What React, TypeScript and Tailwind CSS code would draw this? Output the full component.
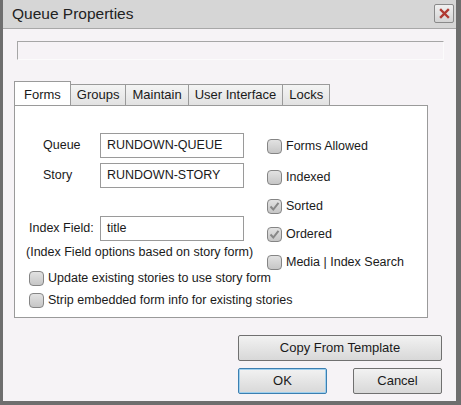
import React from "react";

const font = { fontFamily: '"Liberation Sans", Arial, sans-serif' };

function Check({ checked, label }: { checked?: boolean; label: string }) {
  return (
    <div className="flex items-center h-[20px]">
      <div className="w-[15px] h-[15px] rounded-[4px] border border-[#858585] bg-gradient-to-b from-[#e2e2e2] to-[#c6c6c6] flex items-center justify-center shrink-0">
        {checked && (
          <svg width="11" height="11" viewBox="0 0 11 11">
            <path d="M1.5 5.5 L4.3 8.5 L9.5 1.8" fill="none" stroke="#878787" strokeWidth="2" />
          </svg>
        )}
      </div>
      <span className="ml-[4px] text-[12.5px] text-[#1a1a1a] whitespace-nowrap">{label}</span>
    </div>
  );
}

function Field({ value }: { value: string }) {
  return (
    <div className="w-[144px] h-[25px] bg-white border border-[#9a9a9a] flex items-center pl-[6px] text-[12.5px] text-[#1a1a1a] whitespace-nowrap">
      {value}
    </div>
  );
}

function Tab({ label, active }: { label: string; active?: boolean }) {
  if (active) {
    return (
      <div className="h-[24px] px-[9px] bg-white border border-b-0 border-[#9a9a9a] flex items-start pt-[3px] text-[13px] text-[#1a1a1a] relative z-10 -mb-px">
        {label}
      </div>
    );
  }
  return (
    <div className="h-[21px] mt-[3px] px-[6px] bg-gradient-to-b from-[#f4f4f4] to-[#e2e2e2] border border-b-0 border-l-0 border-[#9a9a9a] flex items-center text-[13px] text-[#1a1a1a]">
      {label}
    </div>
  );
}

function Button({ label, primary, wide }: { label: string; primary?: boolean; wide?: boolean }) {
  return (
    <div
      className={`h-[26px] ${wide ? "w-[204px]" : "w-[89px]"} rounded-[2px] border ${
        primary ? "border-[#3c7fb1] shadow-[inset_0_0_0_1px_#9fd0ee]" : "border-[#707070]"
      } bg-gradient-to-b from-[#f2f2f2] to-[#d8d8d8] flex items-center justify-center text-[13px] text-[#1a1a1a]`}
    >
      {label}
    </div>
  );
}

export default function App() {
  return (
    <div
      className="w-[461px] h-[405px] flex flex-col bg-[#d6d6d6] border-l-[3px] border-r-[5px] border-b-[4px] border-[#6e6e6e]"
      style={font}
    >
      {/* Title bar */}
      <div className="h-[28px] flex items-center pl-[9px] pr-[2px] shrink-0">
        <span className="text-[15.5px] text-[#222]">Queue Properties</span>
        <div className="ml-auto mt-[-1px] w-[20px] h-[19px] rounded-[2px] border border-[#8a8a8a] bg-gradient-to-b from-[#f0f0f0] to-[#d4d4d4] flex items-center justify-center">
          <svg width="11" height="11" viewBox="0 0 11 11">
            <path d="M2 2 L9 9 M9 2 L2 9" stroke="#b03a32" strokeWidth="2.4" strokeLinecap="square" />
          </svg>
        </div>
      </div>

      {/* Body */}
      <div className="flex-1 bg-[#f6f3f6] border-t border-[#a8a8a8] flex flex-col">
        <div className="ml-[14px] mt-[12px] w-[427px] h-[19px] border-t border-l border-[#a6a6a6] border-b border-r border-b-[#fbfbfb] border-r-[#fbfbfb] bg-[#f6f3f6]" />

        {/* Tabs */}
        <div className="ml-[11px] mt-[21px] flex items-start">
          <Tab label="Forms" active />
          <Tab label="Groups" />
          <Tab label="Maintain" />
          <Tab label="User Interface" />
          <Tab label="Locks" />
        </div>

        {/* Panel */}
        <div className="ml-[11px] w-[414px] h-[213px] bg-white border border-[#9a9a9a] flex">
          <div className="w-[238px] flex flex-col">
            <div className="mt-[27px] flex items-center pl-[28px]">
              <span className="w-[57px] text-[12.5px] text-[#1a1a1a]">Queue</span>
              <Field value="RUNDOWN-QUEUE" />
            </div>
            <div className="mt-[5px] flex items-center pl-[28px]">
              <span className="w-[57px] text-[12.5px] text-[#1a1a1a]">Story</span>
              <Field value="RUNDOWN-STORY" />
            </div>
            <div className="mt-[28px] flex items-center pl-[14px]">
              <span className="w-[71px] text-[12.5px] text-[#1a1a1a]">Index Field:</span>
              <Field value="title" />
            </div>
            <div className="mt-[2px] pl-[11px] text-[12.5px] text-[#1a1a1a] whitespace-nowrap">
              (Index Field options based on story form)
            </div>
            <div className="mt-[7px] pl-[14px]">
              <Check label="Update existing stories to use story form" />
            </div>
            <div className="mt-[2px] pl-[14px]">
              <Check label="Strip embedded form info for existing stories" />
            </div>
          </div>
          <div className="flex flex-col pl-[14px] pt-[30px]">
            <Check label="Forms Allowed" />
            <div className="mt-[11px]">
              <Check label="Indexed" />
            </div>
            <div className="mt-[9px]">
              <Check label="Sorted" checked />
            </div>
            <div className="mt-[8px]">
              <Check label="Ordered" checked />
            </div>
            <div className="mt-[8px]">
              <Check label="Media | Index Search" />
            </div>
          </div>
        </div>

        {/* Buttons */}
        <div className="ml-[235px] mt-[17px] flex flex-col gap-[7px]">
          <Button label="Copy From Template" wide />
          <div className="flex gap-[26px]">
            <Button label="OK" primary />
            <Button label="Cancel" />
          </div>
        </div>
      </div>
    </div>
  );
}
